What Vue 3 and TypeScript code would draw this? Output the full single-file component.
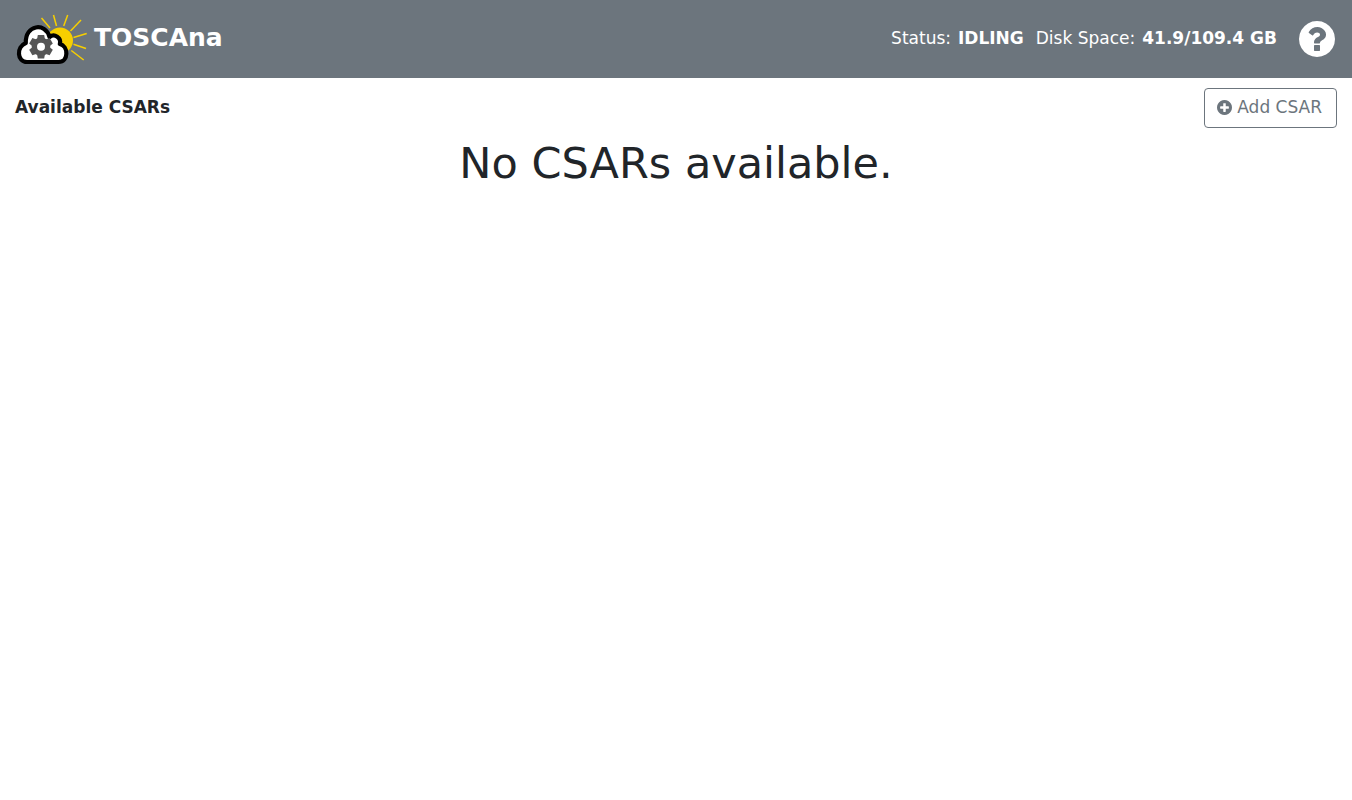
<script setup lang="ts">
interface Ray {
  x1: number
  y1: number
  x2: number
  y2: number
}

const rays: Ray[] = [
  { x1: 41.5, y1: 18, x2: 50, y2: 28 },
  { x1: 53.5, y1: 15, x2: 56.5, y2: 26 },
  { x1: 67.7, y1: 15, x2: 63.7, y2: 26 },
  { x1: 81, y1: 20, x2: 70.5, y2: 31 },
  { x1: 86.7, y1: 33.5, x2: 73.5, y2: 37.5 },
  { x1: 86, y1: 48.5, x2: 73.5, y2: 44.3 },
  { x1: 83.7, y1: 60, x2: 71.3, y2: 50.5 },
]

const teeth: number[] = [0, 60, 120, 180, 240, 300]

const status = 'IDLING'
const diskSpace = '41.9/109.4 GB'
</script>

<template>
  <div class="page">
    <header class="navbar">
      <a class="brand" href="#">
        <svg class="logo" viewBox="15 13 74 52" aria-hidden="true">
          <g stroke="#f7cf00" stroke-width="1.5">
            <line v-for="(ray, i) in rays" :key="i" v-bind="ray" />
          </g>
          <circle cx="60" cy="40.5" r="13" fill="#f7cf00" />
          <path
            d="M27 62C17 62 16 47 25.800 43C25 24.500 45.500 22 49.500 37A6.500 6.500 0 0 1 59.800 44C68.500 46 69 62 58.500 62Z"
            fill="#fff"
            stroke="#000"
            stroke-width="4.200"
            stroke-linejoin="round"
          />
          <g fill="#555" transform="translate(41 46.700)">
            <circle r="9.300" />
            <path v-for="angle in teeth" :key="angle" d="M-4 -7L-3.200 -11.800H3.200L4 -7Z" :transform="`rotate(${angle})`" />
            <circle r="4" fill="#fff" />
          </g>
        </svg>
        <span>TOSCAna</span>
      </a>
      <div class="info">
        <span class="stat">Status: <strong>{{ status }}</strong></span>
        <span class="stat">Disk Space: <strong>{{ diskSpace }}</strong></span>
        <a class="help" href="#" aria-label="Help">
          <svg viewBox="128 128 1536 1536" fill="currentColor" aria-hidden="true">
            <path d="M1024 1376v-192q0-14-9-23t-23-9h-192q-14 0-23 9t-9 23v192q0 14 9 23t23 9h192q14 0 23-9t9-23zm256-672q0-88-55.5-163t-138.5-116-170-41q-243 0-371 213-15 24 8 42l132 100q7 6 19 6 16 0 25-12 53-68 86-92 34-24 86-24 48 0 85.500 26t37.500 59q0 38-20 61t-68 45q-63 28-115.500 86.500t-52.500 125.500v36q0 14 9 23t23 9h192q14 0 23-9t9-23q0-19 21.500-49.500t54.500-49.500q32-18 49-28.500t46-35 44.500-48 28-60.500 12.500-81zm384 192q0 209-103 385.500t-279.500 279.500-385.500 103-385.500-103-279.500-279.500-103-385.500 103-385.500 279.500-279.500 385.500-103 385.500 103 279.500 279.500 103 385.500z" />
          </svg>
        </a>
      </div>
    </header>
    <main class="content">
      <div class="toolbar">
        <strong>Available CSARs</strong>
        <button class="add" type="button">
          <svg viewBox="128 128 1536 1536" fill="currentColor" aria-hidden="true">
            <path d="M1344 960v-128q0-26-19-45t-45-19h-256v-256q0-26-19-45t-45-19h-128q-26 0-45 19t-19 45v256h-256q-26 0-45 19t-19 45v128q0 26 19 45t45 19h256v256q0 26 19 45t45 19h128q26 0 45-19t19-45v-256h256q26 0 45-19t19-45zm320-64q0 209-103 385.500t-279.500 279.500-385.500 103-385.500-103-279.500-279.500-103-385.500 103-385.500 279.500-279.500 385.500-103 385.500 103 279.500 279.500 103 385.500z" />
          </svg>
          <span>Add CSAR</span>
        </button>
      </div>
      <h1>No CSARs available.</h1>
    </main>
  </div>
</template>

<style>
body {
  margin: 0;
  background: #fff;
}
</style>

<style scoped>
.page {
  font-family: "DejaVu Sans", sans-serif;
  font-size: 17px;
  line-height: 26px;
  color: #212529;
}

.navbar {
  display: flex;
  align-items: center;
  justify-content: space-between;
  box-sizing: border-box;
  min-height: 78px;
  padding: 0 17px 0 15px;
  background: #6c757d;
  color: #fff;
}

.brand {
  display: flex;
  align-items: center;
  gap: 5px;
  color: inherit;
  font-size: 25px;
  line-height: 36px;
  font-weight: bold;
  text-decoration: none;
}

.brand span {
  padding-bottom: 2px;
}

.logo {
  display: block;
  width: 74px;
  height: 52px;
}

.info {
  display: flex;
  align-items: center;
}

.stat {
  display: flex;
  gap: 7px;
  padding-bottom: 2px;
  margin-right: 12px;
}

.help {
  display: block;
  margin-left: 10px;
  color: inherit;
}

.help svg {
  display: block;
  width: 36px;
  height: 36px;
}

.content {
  padding: 10px 15px;
}

.toolbar {
  display: flex;
  justify-content: space-between;
  align-items: center;
}

.toolbar strong {
  padding-bottom: 2px;
}

.add {
  display: flex;
  align-items: center;
  gap: 5px;
  padding: 5px 14px 7px 12px;
  border: 1px solid #6c757d;
  border-radius: 4px;
  background: transparent;
  color: #6c757d;
  font: inherit;
  cursor: pointer;
}

.add svg {
  width: 15px;
  height: 15px;
}

h1 {
  margin: 9px 0 0;
  font-size: 43px;
  line-height: 52px;
  font-weight: normal;
  text-align: center;
}
</style>
